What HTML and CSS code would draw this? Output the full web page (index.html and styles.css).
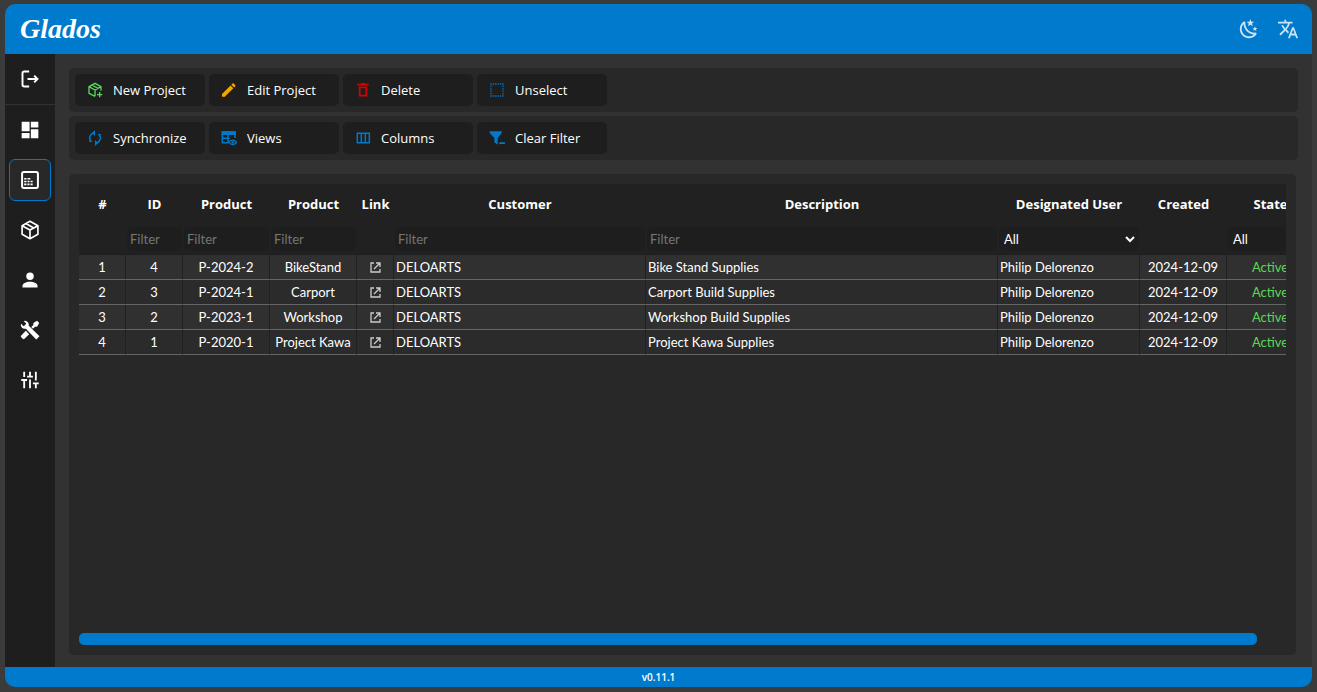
FILE: index.html
```
<!DOCTYPE html>
<html lang="en">
<head>
<meta charset="utf-8">
<title>Glados</title>
<link rel="stylesheet" href="styles.css">
</head>
<body>
<div class="app">
  <header class="topbar">
    <span class="logo">Glados</span>
    <div class="topbar-actions">
      <button class="top-button" aria-label="Theme"><svg viewBox="0 0 24 24"><path d="M17.75 4.09 15.22 6.03 16.13 9.09 13.5 7.28 10.87 9.09 11.78 6.03 9.25 4.09 12.44 4 13.5 1 14.56 4 17.75 4.09M21.25 11 19.61 12.25 20.2 14.23 18.5 13.06 16.8 14.23 17.39 12.25 15.75 11 17.81 10.95 18.5 9 19.19 10.95 21.25 11M18.97 15.95C19.8 15.87 20.69 17.05 20.16 17.8 19.84 18.25 19.5 18.67 19.08 19.07 15.17 23 8.84 23 4.94 19.07 1.03 15.17 1.03 8.83 4.94 4.93 5.34 4.53 5.76 4.17 6.21 3.85 6.96 3.32 8.14 4.21 8.06 5.04 7.79 7.9 8.75 10.87 10.95 13.06 13.14 15.26 16.1 16.22 18.97 15.95M17.33 17.97C14.5 17.81 11.7 16.64 9.53 14.5 7.36 12.31 6.2 9.5 6.04 6.68 3.23 9.82 3.34 14.64 6.35 17.66 9.37 20.67 14.19 20.78 17.33 17.97Z"/></svg></button>
      <button class="top-button" aria-label="Language"><svg viewBox="0 0 24 24"><path d="M12.87 15.07 10.33 12.56 10.36 12.53C12.1 10.59 13.34 8.36 14.07 6H17V4H10V2H8V4H1V6H12.17C11.5 7.92 10.44 9.75 9 11.35 8.07 10.32 7.3 9.19 6.69 8H4.69C5.42 9.63 6.42 11.17 7.67 12.56L2.58 17.58 4 19 9 14 12.11 17.11 12.87 15.07M18.5 10H16.5L12 22H14L15.12 19H19.87L21 22H23L18.5 10M15.88 17 17.5 12.67 19.12 17H15.88Z"/></svg></button>
    </div>
  </header>
  <div class="middle">
    <nav class="sidebar">
      <div class="side-top"><button class="side-button" aria-label="Log out"><svg viewBox="0 0 24 24"><path d="M11 3H5Q3 3 3 5V19Q3 21 5 21H11M9 12H21M17 8 21 12 17 16" fill="none" stroke="currentColor" stroke-width="2.300"/></svg></button></div>
      <button class="side-button" aria-label="Dashboard"><svg viewBox="0 0 24 24"><path d="M2 2h9.500v11.500H2zM13 2h9v7h-9zM13 11h9v11h-9zM2 15.500h9.500V22H2z"/></svg></button>
      <button class="side-button selected" aria-label="Projects"><svg viewBox="0 0 24 24"><rect x="2.500" y="2.500" width="19" height="19" rx="2" fill="none" stroke="currentColor" stroke-width="2.400"/><path d="M5 9.500h2.800v2H5zM9 9.500h3.400v2H9zM5 12.800h2.800v2H5zM9 12.800h2.400v2H9zM12.600 12.800h2.600v2h-2.600zM5 16.200h2.800v2H5zM9 16.200h2.400v2H9zM12.600 16.200h2.600v2h-2.600z"/></svg></button>
      <button class="side-button" aria-label="Products"><svg viewBox="0 0 24 24"><path d="M12 1.500 21.500 7V17L12 22.500 2.500 17V7ZM2.500 7 12 12 21.500 7M12 12V22M7.500 4.500 16.500 9.500" fill="none" stroke="currentColor" stroke-width="2" stroke-linejoin="round"/></svg></button>
      <button class="side-button" aria-label="Users"><svg viewBox="0 0 24 24"><circle cx="12" cy="7.500" r="4.500"/><path d="M3 21v-2c0-3 4-5 9-5s9 2 9 5v2z"/></svg></button>
      <button class="side-button" aria-label="Tools"><svg viewBox="0 0 24 24"><path d="M22.500 20.500 20.500 22.500A1 1 0 0 1 18.600 22.500L7 10.500A3.810 3.810 0 0 1 5 10.500 4.500 4.500 0 0 1 1.300 4.500L4.300 7.400 5.500 6.700 6.700 5.500 7.400 4.300 4.500 1.300A4.500 4.500 0 0 1 10.500 5 3.810 3.810 0 0 1 10.500 7L22.500 18.600A1 1 0 0 1 22.500 20.500M1.500 18.600A1.500 1.500 0 0 0 1.500 20.700L3.300 22.500A1.500 1.500 0 0 0 5.400 22.500L11 17 7 13ZM20.500 1 16 3.500V6L13.500 8.500 15.500 10.500 18 8H20.500L23 3.500Z"/></svg></button>
      <button class="side-button" aria-label="Settings"><svg viewBox="0 0 24 24"><path d="M5 2V8.500M1.500 12H8.500M5 12V22M12 2V8M8.500 8H15.500M12 11.500V22M19 2V12.500M15.500 16H22.500M19 16V22" fill="none" stroke="currentColor" stroke-width="2.200"/></svg></button>
    </nav>
    <main class="content">
      <div class="toolbars">
        <div class="toolbar">
          <button class="tool"><svg class="green" viewBox="0 0 24 24"><path d="M12 21.500 3 17V7L12 2 21 7V13M3 7 12 12 21 7M12 12V21.500M7.500 4.500 16.500 9.500M19 15V23M15 19H23" fill="none" stroke="currentColor" stroke-width="2"/></svg>New Project</button>
          <button class="tool"><svg class="amber" viewBox="0 0 24 24"><path d="M21.500 6.500C22 6 22 5.300 21.500 4.800L19 2.300C18.500 1.800 17.800 1.800 17.300 2.300L15.500 4.100 19.700 8.300M1.500 18V22H5.700L18.500 9.500 14.300 5.300Z"/></svg>Edit Project</button>
          <button class="tool"><svg class="red" viewBox="0 0 24 24"><path d="M3.500 4H20.500M9 2.700H15M7 8.200V20.500H17V8.200Z" fill="none" stroke="currentColor" stroke-width="2.600"/></svg>Delete</button>
          <button class="tool"><svg class="blue" viewBox="0 0 24 24"><path d="M2 3H22M2 21H22M3 2V22M21 2V22" fill="none" stroke="currentColor" stroke-width="2" stroke-dasharray="2 1.600"/></svg>Unselect</button>
        </div>
        <div class="toolbar">
          <button class="tool"><svg class="blue" viewBox="0 0 24 24"><path d="M12 4.500A7.500 7.500 0 0 0 5.500 16.500M3.500 17H7.500M12 19.500A7.500 7.500 0 0 0 18.500 7.500M16.500 7H20.500" fill="none" stroke="currentColor" stroke-width="2"/><path d="M12 0 7.500 4.500 12 9ZM12 15 16.500 19.500 12 24Z"/></svg>Synchronize</button>
          <button class="tool"><svg class="blue" viewBox="0 0 24 24"><path d="M11 19H2V3H21V12M2 12.500H13M10.500 6V18" fill="none" stroke="currentColor" stroke-width="2.200"/><path d="M1 2h21v5.500H1z"/><path d="M11.500 18.500Q17.500 12 23.500 18.500 17.500 25 11.500 18.500Z" fill="none" stroke="currentColor" stroke-width="2"/><circle cx="17.500" cy="18.500" r="1.800"/></svg>Views</button>
          <button class="tool"><svg class="blue" viewBox="0 0 24 24"><path d="M3.500 5H21.500V19H3.500ZM9.500 5V19M15.500 5V19" fill="none" stroke="currentColor" stroke-width="2.200"/></svg>Columns</button>
          <button class="tool"><svg class="blue" viewBox="0 0 24 24"><path d="M1 2H19V4.500L13 12V22L8 18.500V12L1 4.500ZM15.500 18.500H24V21H15.500Z"/></svg>Clear Filter</button>
        </div>
      </div>
      <section class="panel">
        <div class="table-scroll">
          <table class="grid">
            <colgroup><col class="c-num"><col class="c-id"><col class="c-mid"><col class="c-mid"><col class="c-link"><col class="c-customer"><col><col class="c-user"><col class="c-mid"><col class="c-mid"></colgroup>
            <thead>
              <tr class="titles"><th>#</th><th>ID</th><th>Product</th><th>Product</th><th>Link</th><th>Customer</th><th>Description</th><th>Designated User</th><th>Created</th><th>State</th></tr>
              <tr class="filters">
                <td></td>
                <td><input class="filter" placeholder="Filter" aria-label="Filter ID"></td>
                <td><input class="filter" placeholder="Filter" aria-label="Filter product number"></td>
                <td><input class="filter" placeholder="Filter" aria-label="Filter product name"></td>
                <td></td>
                <td><input class="filter" placeholder="Filter" aria-label="Filter customer"></td>
                <td><input class="filter" placeholder="Filter" aria-label="Filter description"></td>
                <td><div class="select-box"><select class="filter" aria-label="Filter designated user"><option>All</option></select><svg viewBox="0 0 10 10"><path d="M1 3 5 7 9 3" fill="none" stroke="currentColor" stroke-width="2"/></svg></div></td>
                <td></td>
                <td><div class="select-box"><select class="filter" aria-label="Filter state"><option>All</option></select><svg viewBox="0 0 10 10"><path d="M1 3 5 7 9 3" fill="none" stroke="currentColor" stroke-width="2"/></svg></div></td>
              </tr>
            </thead>
            <tbody>
              <tr><td>1</td><td>4</td><td>P-2024-2</td><td>BikeStand</td><td><a href="#" class="link" aria-label="Open BikeStand"><svg viewBox="0 0 12 12"><path d="M5 2H2V11H11V8M7 2H11V6M11 2 5 8" fill="none" stroke="currentColor" stroke-width="1.300"/></svg></a></td><td class="left">DELOARTS</td><td class="left">Bike Stand Supplies</td><td class="left">Philip Delorenzo</td><td>2024-12-09</td><td class="active">Active</td></tr>
              <tr><td>2</td><td>3</td><td>P-2024-1</td><td>Carport</td><td><a href="#" class="link" aria-label="Open Carport"><svg viewBox="0 0 12 12"><path d="M5 2H2V11H11V8M7 2H11V6M11 2 5 8" fill="none" stroke="currentColor" stroke-width="1.300"/></svg></a></td><td class="left">DELOARTS</td><td class="left">Carport Build Supplies</td><td class="left">Philip Delorenzo</td><td>2024-12-09</td><td class="active">Active</td></tr>
              <tr><td>3</td><td>2</td><td>P-2023-1</td><td>Workshop</td><td><a href="#" class="link" aria-label="Open Workshop"><svg viewBox="0 0 12 12"><path d="M5 2H2V11H11V8M7 2H11V6M11 2 5 8" fill="none" stroke="currentColor" stroke-width="1.300"/></svg></a></td><td class="left">DELOARTS</td><td class="left">Workshop Build Supplies</td><td class="left">Philip Delorenzo</td><td>2024-12-09</td><td class="active">Active</td></tr>
              <tr><td>4</td><td>1</td><td>P-2020-1</td><td>Project Kawa</td><td><a href="#" class="link" aria-label="Open Project Kawa"><svg viewBox="0 0 12 12"><path d="M5 2H2V11H11V8M7 2H11V6M11 2 5 8" fill="none" stroke="currentColor" stroke-width="1.300"/></svg></a></td><td class="left">DELOARTS</td><td class="left">Project Kawa Supplies</td><td class="left">Philip Delorenzo</td><td>2024-12-09</td><td class="active">Active</td></tr>
            </tbody>
          </table>
        </div>
        <div class="scroll-track"><div class="scroll-thumb" style="width: 97.6%"></div></div>
      </section>
    </main>
  </div>
  <footer class="statusbar">v0.11.1</footer>
</div>
</body>
</html>
```
FILE: styles.css
```
* { box-sizing: border-box; }
body {
  margin: 0;
  height: 100vh;
  padding: 4px 5px 5px;
  background: #3b3b3b;
  color: #fff;
  font-family: Lato, sans-serif;
  font-size: 13px;
  overflow: hidden;
}
button, input, select { font: inherit; color: inherit; border: 0; margin: 0; padding: 0; background: none; }
svg { fill: currentColor; display: block; flex: none; }
.app {
  height: 100%;
  display: flex;
  flex-direction: column;
  border-radius: 10px;
  overflow: hidden;
  background: #323232;
}
.topbar {
  height: 50px;
  flex: none;
  display: flex;
  align-items: center;
  justify-content: space-between;
  padding: 0 13px 0 15px;
  background: #007acc;
}
.logo { font: italic bold 28px/50px "Liberation Serif", serif; }
.topbar-actions { display: flex; gap: 17px; color: #cce4f5; }
.top-button svg { width: 22px; height: 22px; }
.middle { flex: 1; min-height: 0; display: flex; }
.sidebar {
  width: 50px;
  flex: none;
  display: flex;
  flex-direction: column;
  align-items: center;
  gap: 8px;
  background: #1e1e1e;
}
.side-top {
  width: 100%;
  height: 51px;
  margin-bottom: -4px;
  display: grid;
  place-items: center;
  border-bottom: 1px solid #323232;
}
.side-button {
  width: 42px;
  height: 42px;
  flex: none;
  display: grid;
  place-items: center;
  border: 1px solid transparent;
  border-radius: 6px;
}
.side-button svg { width: 20px; height: 20px; }
.side-button.selected { border-color: #007acc; background: #282828; }
.content {
  flex: 1;
  min-width: 0;
  display: flex;
  flex-direction: column;
  gap: 14px;
  padding: 14px 16px 12px 14px;
}
.toolbars { display: flex; flex-direction: column; gap: 4px; margin-right: -2px; }
.toolbar { display: flex; gap: 4px; padding: 6px; border-radius: 5px; background: #282828; }
.tool {
  width: 130px;
  height: 32px;
  display: flex;
  align-items: center;
  gap: 10px;
  padding: 0 12px;
  border-radius: 5px;
  background: #1e1e1e;
  font-family: "Open Sans", sans-serif;
  white-space: nowrap;
}
.tool svg { width: 16px; height: 16px; }
.green { color: #5bd75b; }
.amber { color: #f0a800; }
.red { color: #d80000; }
.blue { color: #007acc; }
.panel {
  flex: 1;
  min-height: 0;
  display: flex;
  flex-direction: column;
  padding: 10px;
  border-radius: 5px;
  background: #282828;
}
.table-scroll { flex: 1; min-height: 0; overflow: auto; scrollbar-width: none; }
.grid { width: 100%; min-width: 1235px; table-layout: fixed; border-collapse: separate; border-spacing: 0; }
.c-num { width: 47px; }
.c-id { width: 57px; }
.c-mid { width: 87px; }
.c-link { width: 37px; }
.c-customer { width: 252px; }
.c-user { width: 142px; }
thead { background: #212121; }
th { height: 40px; padding: 0; font: bold 13px "Open Sans", sans-serif; white-space: nowrap; }
.filters td { height: 31px; padding: 0 1px; border-bottom: 1px solid #1e1e1e; }
.filter {
  display: block;
  width: 100%;
  height: 24px;
  padding: 0 3px;
  border-radius: 5px;
  background: #1e1e1e;
}
.filter::placeholder { color: #757575; }
.select-box { display: grid; align-items: center; }
.select-box > * { grid-area: 1 / 1; }
.select-box select { appearance: none; padding-left: 5px; }
.select-box svg { width: 10px; height: 10px; justify-self: end; margin-right: 4px; pointer-events: none; }
tbody tr { background: #2b2b2b; }
tbody tr:nth-child(odd) { background: #303030; }
tbody td {
  height: 25px;
  padding: 0;
  text-align: center;
  white-space: nowrap;
  border-right: 1px solid #212121;
  border-bottom: 1px solid #666;
}
tbody td.left { text-align: left; padding-left: 2px; }
tbody td.active { color: #5bd75b; }
.link { display: grid; place-items: center; color: #ccc; }
.link svg { width: 12px; height: 12px; }
.scroll-track { height: 12px; flex: none; }
.scroll-thumb { height: 12px; border-radius: 5px; background: #007acc; }
.statusbar {
  height: 20px;
  flex: none;
  display: grid;
  place-items: center;
  background: #007acc;
  font: 600 10px "Open Sans", sans-serif;
}
```
